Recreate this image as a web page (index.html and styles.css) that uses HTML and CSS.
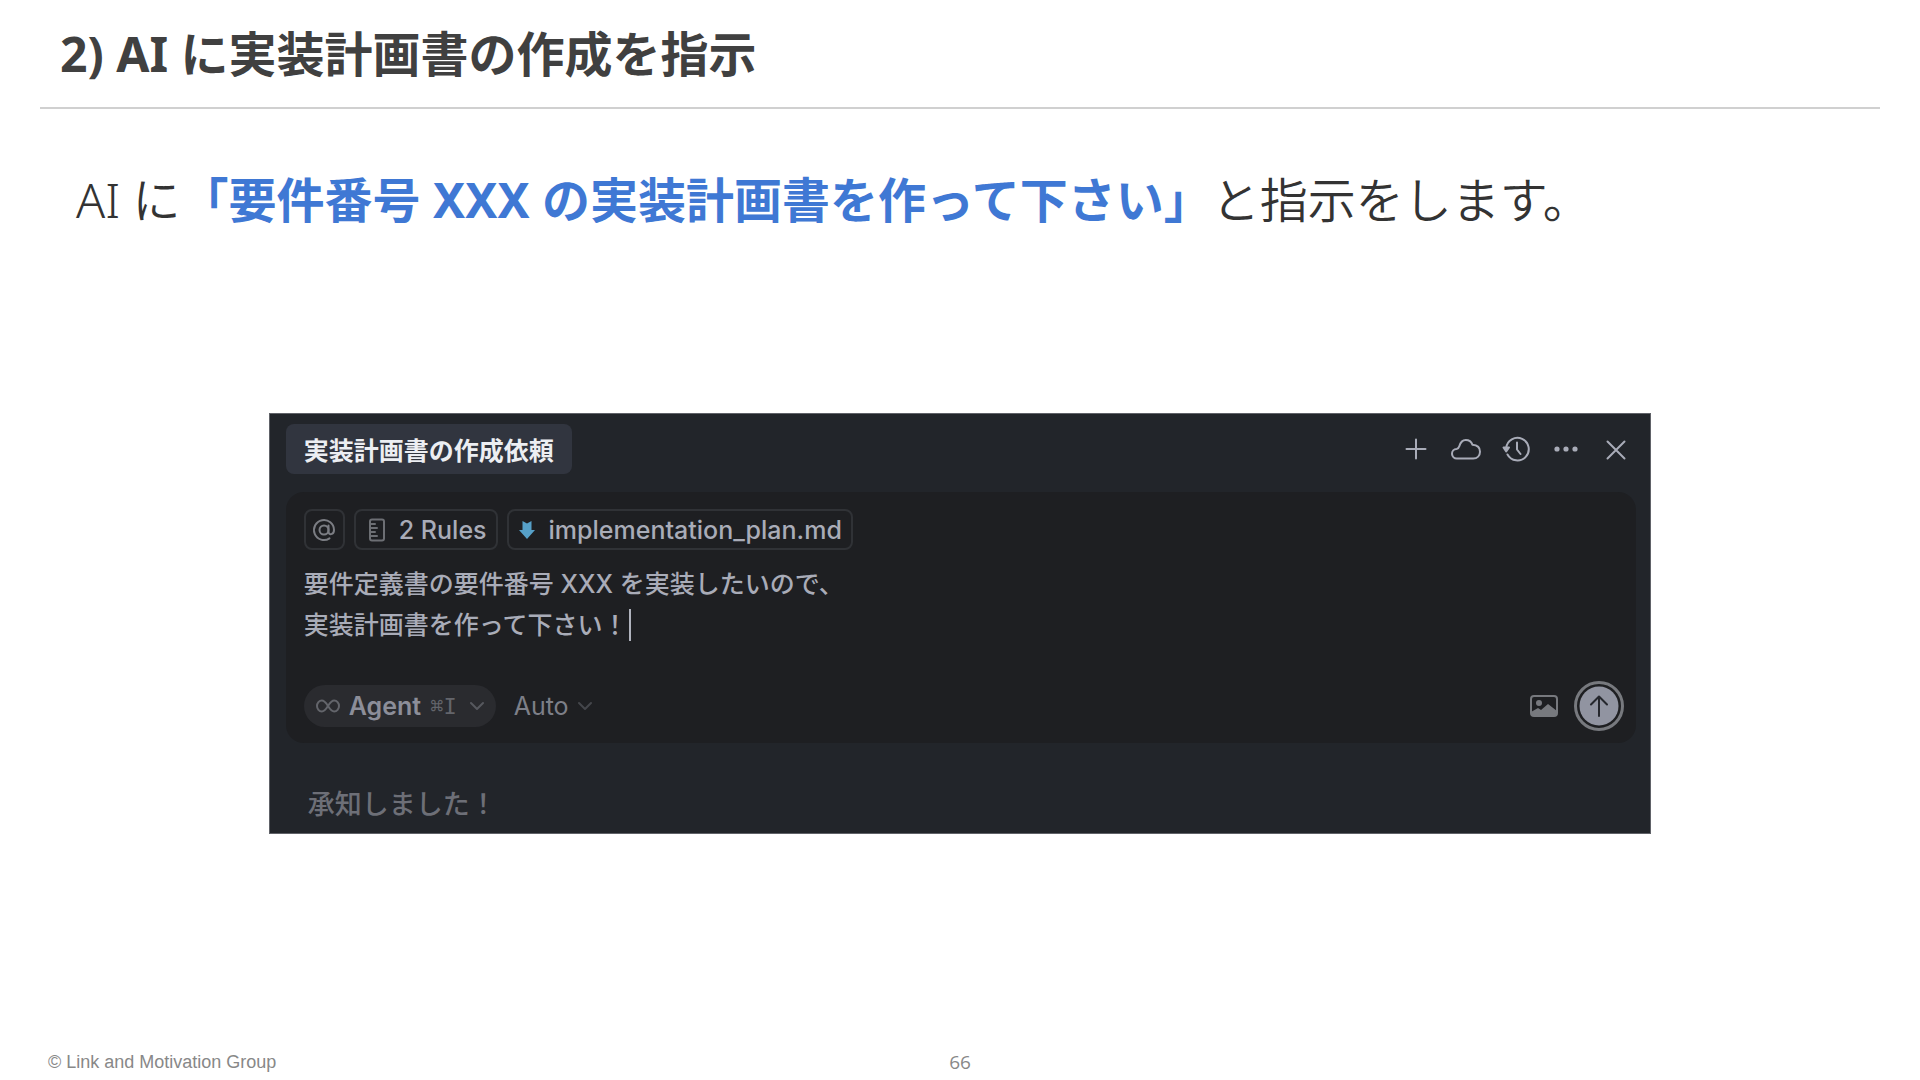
FILE: index.html
```html
<!DOCTYPE html>
<html lang="ja">
<head>
    <meta charset="UTF-8">
    <meta name="viewport" content="width=device-width, initial-scale=1.0">
    <title>AI に実装計画書の作成を指示</title>
    <link rel="stylesheet" href="styles.css">
</head>
<body>

<header>
    <h1>2) AI に実装計画書の作成を指示</h1>
</header>

<main>
    <p class="lead">AI に<strong>「要件番号 XXX の実装計画書を作って下さい」</strong>と指示をします。</p>

    <div class="panel">
        <div class="panel-header">
            <button class="tab">実装計画書の作成依頼</button>
            <div class="actions">
                <button aria-label="New chat">
                    <svg width="28" height="28" viewBox="0 0 28 28"><path d="M14 4.500v19M4.500 14h19"/></svg>
                </button>
                <button aria-label="Cloud">
                    <svg width="32" height="28" viewBox="0 0 32 28"><path d="M7 23.500a4.800 4.800 0 0 1-.4-9.600c1.600-.2 2.200-.9 2.700-2.600C10.300 7.600 12.600 5 15.800 5c3.400 0 5.600 1.800 6.600 4.700 4.900.2 7.600 3.100 7.600 7 0 4-2.800 6.800-6.800 6.800z"/></svg>
                </button>
                <button aria-label="History">
                    <svg width="30" height="28" viewBox="0 0 30 28"><path d="M5.200 13a11.300 11.300 0 1 1 1.300 6.500M16 7.500v7l3.500 4.500"/><path class="fill" d="M2.500 12.500h5.500l-2.800 4z"/></svg>
                </button>
                <button aria-label="More">
                    <svg width="28" height="28" viewBox="0 0 28 28"><g class="fill"><circle cx="5" cy="14" r="1.600"/><circle cx="14" cy="14" r="1.600"/><circle cx="23" cy="14" r="1.600"/></g></svg>
                </button>
                <button aria-label="Close">
                    <svg width="28" height="28" viewBox="0 0 28 28"><path d="M5.500 6.500l17 17M22.500 6.500l-17 17"/></svg>
                </button>
            </div>
        </div>

        <div class="composer">
            <div class="chips">
                <button class="chip chip-at" aria-label="Add context">
                    <svg width="26" height="26" viewBox="0 0 26 26"><circle cx="13" cy="13" r="4.500"/><path d="M17.500 8.500v6c0 4 5.500 3.500 5.500-1.500a10 10 0 1 0-4.500 8.400"/></svg>
                </button>
                <button class="chip chip-rules">
                    <svg width="16" height="24" viewBox="0 0 16 24"><rect x="1" y="1.500" width="14" height="21" rx="2"/><path d="M1 6h5M1 10h7M1 14h5M1 18h7"/></svg>
                    2 Rules
                </button>
                <button class="chip chip-file">
                    <svg width="16" height="20" viewBox="0 0 16 20"><path d="M3.500 1L8 3.500 12.500 1v9H16l-8 9-8-9h3.500z"/></svg>
                    implementation_plan.md
                </button>
            </div>
            <div class="prompt">
                <textarea rows="2" aria-label="Prompt">要件定義書の要件番号 XXX を実装したいので、
実装計画書を作って下さい！</textarea>
                <span class="caret"></span>
            </div>
            <div class="toolbar">
                <button class="mode">
                    <svg width="24" height="16" viewBox="0 0 24 16"><path d="M12 8C9.500 4 8 2.500 5.800 2.500a4.800 5.500 0 0 0 0 11C8 13.500 9.500 12 12 8s4-5.500 6.200-5.500a4.800 5.500 0 0 1 0 11C16 13.500 14.500 12 12 8z"/></svg>
                    <b>Agent</b>
                    <kbd>⌘I</kbd>
                    <svg class="chevron" width="14" height="10" viewBox="0 0 14 10"><path d="M1 2l6 6 6-6"/></svg>
                </button>
                <button class="model">
                    Auto
                    <svg class="chevron" width="14" height="10" viewBox="0 0 14 10"><path d="M1 2l6 6 6-6"/></svg>
                </button>
                <button class="image" aria-label="Attach image">
                    <svg width="28" height="22" viewBox="0 0 28 22"><rect x="1" y="1" width="26" height="20" rx="3"/><circle cx="9" cy="8" r="3"/><path d="M1 17l7-4 3 2 7-6 9 7v3q0 2-2 2H3q-2 0-2-2z"/></svg>
                </button>
                <button class="send" aria-label="Send">
                    <svg width="50" height="50" viewBox="0 0 50 50"><circle class="ring" cx="25" cy="25" r="23.500"/><circle class="disc" cx="25" cy="25" r="19.500"/><path d="M25 35V16M17 23.500l8-8 8 8"/></svg>
                </button>
            </div>
        </div>

        <p class="reply">承知しました！</p>
    </div>
</main>

<footer>
    <span>© Link and Motivation Group</span>
    <span class="page">66</span>
</footer>

</body>
</html>
```
FILE: styles.css
```css
* {
    box-sizing: border-box;
}
body {
    margin: 0;
    min-height: 100vh;
    display: flex;
    flex-direction: column;
    background-color: #fff;
    color: #333;
    font-family: "Noto Sans", "Noto Sans CJK JP", sans-serif;
}
header {
    margin: 0 40px;
    padding: 16px 20px;
    border-bottom: 2px solid #d0d0d0;
}
h1 {
    margin: 0;
    color: #404040;
    font-size: 48px;
    line-height: 75px;
}
main {
    flex: 1;
}
.lead {
    margin: 53px 76px 176px;
    font-size: 48px;
    font-weight: 350;
    line-height: 75px;
}
.lead strong {
    color: #3f78d4;
    font-weight: 700;
}
button {
    display: flex;
    align-items: center;
    padding: 0;
    border: none;
    background: none;
    color: inherit;
    font: inherit;
    cursor: pointer;
}
svg {
    flex: none;
    fill: none;
    stroke: currentColor;
    stroke-width: 2;
    stroke-linecap: round;
    stroke-linejoin: round;
}
.fill {
    fill: currentColor;
}

/* Chat panel */
.panel {
    width: 72%;
    margin: 0 auto;
    padding: 10px 14px 8px 16px;
    border: 1px solid #606268;
    background-color: #22252a;
    color: #a9acb8;
    font-family: Inter, "Noto Sans CJK JP", sans-serif;
    font-size: 25px;
    font-weight: 500;
}
.panel-header {
    display: flex;
    align-items: center;
    justify-content: space-between;
    margin-bottom: 18px;
}
.tab {
    height: 50px;
    padding: 0 18px;
    border-radius: 8px;
    background-color: #31353f;
    color: #eceef2;
    font-weight: 700;
}
.actions {
    display: flex;
    gap: 22px;
    padding-right: 6px;
}
.actions button {
    width: 28px;
    justify-content: center;
}
.composer {
    padding: 17px 12px 12px 18px;
    border-radius: 18px;
    background-color: #1e1f22;
}
.chips {
    display: flex;
    gap: 9px;
}
.chip {
    height: 41px;
    border: 2px solid #303236;
    border-radius: 8px;
}
.chip-at {
    width: 41px;
    justify-content: center;
    color: #7b7d83;
}
.chip-rules {
    gap: 14px;
    padding: 0 9px 0 13px;
}
.chip-rules svg {
    color: #6d6f74;
}
.chip-file {
    gap: 14px;
    padding: 0 9px 0 10px;
}
.chip-file svg {
    fill: #56a0c8;
    stroke: none;
}
.prompt {
    position: relative;
    margin-top: 14px;
}
textarea {
    display: block;
    width: 100%;
    padding: 0;
    border: none;
    outline: none;
    background: none;
    color: inherit;
    font: inherit;
    line-height: 41px;
    resize: none;
    overflow: hidden;
}
.caret {
    position: absolute;
    left: 325px;
    top: 45px;
    width: 2px;
    height: 32px;
    background-color: #b0b3be;
}
.toolbar {
    display: flex;
    align-items: center;
    margin-top: 35px;
    color: #7d7f88;
}
.mode {
    gap: 9px;
    height: 42px;
    padding: 0 12px;
    border-radius: 21px;
    background-color: #2a2b2f;
    color: #63656b;
}
.mode b {
    color: #8c8e99;
    font-weight: 600;
}
kbd {
    margin-right: 4px;
    font-family: "DejaVu Sans Mono", monospace;
    font-size: 22px;
}
.model {
    gap: 9px;
    margin-left: 18px;
    font-weight: 400;
}
.chevron {
    color: #56585e;
}
.model .chevron {
    color: #44464b;
}
.image {
    margin-left: auto;
    color: #77797e;
}
.image circle,
.image path {
    fill: currentColor;
    stroke: none;
}
.send {
    margin-left: 16px;
    color: #25272d;
}
.ring {
    stroke: #77797e;
    stroke-width: 3;
}
.disc {
    fill: #9194a1;
    stroke: none;
}
.reply {
    margin: 42px 22px 0;
    color: #6d6f77;
    font-size: 27px;
    line-height: 40px;
}

footer {
    display: grid;
    grid-template-columns: 1fr auto 1fr;
    padding: 0 48px 6px;
    color: #888;
    font-family: "Liberation Sans", Arial, sans-serif;
    font-size: 18px;
    line-height: 24px;
}
.page {
    font-family: "Open Sans", sans-serif;
    font-size: 19px;
}
```
